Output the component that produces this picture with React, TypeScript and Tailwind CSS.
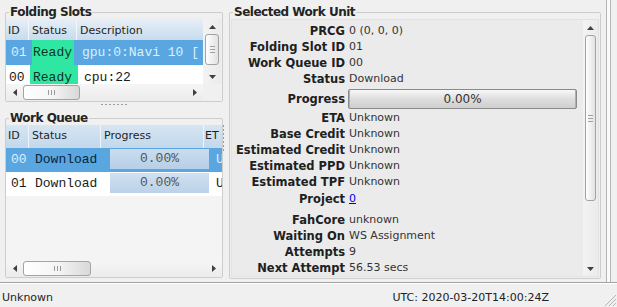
import type { ReactNode } from 'react'

const ui = "font-['DejaVu_Sans',sans-serif]"
const mono = "font-['Liberation_Mono','Courier_New',monospace]"

type Dir = 'up' | 'down' | 'left' | 'right'

function Arrow({ dir }: { dir: Dir }) {
  const vertical = dir === 'up' || dir === 'down'
  const w = vertical ? 7 : 4
  const h = vertical ? 4 : 7
  const points = {
    up: '0,4 7,4 3.5,0',
    down: '0,0 7,0 3.5,4',
    left: '4,0 4,7 0,3.5',
    right: '0,0 0,7 4,3.5',
  }[dir]
  return (
    <svg width={w} height={h} viewBox={`0 0 ${w} ${h}`}>
      <polygon points={points} fill="#404040" />
    </svg>
  )
}

function HScroll({ thumb }: { thumb: string }) {
  return (
    <div className="flex h-[17px] bg-gradient-to-b from-[#f6f6f6] to-[#ececec]">
      <div className="flex w-[17px] items-center justify-center">
        <Arrow dir="left" />
      </div>
      <div className="flex-1 py-[1px]">
        <div
          className={`flex h-full items-center justify-center gap-[2px] rounded-[3px] border border-[#a3a3a3] bg-gradient-to-r from-white via-[#f5f5f5] to-[#d9d9d9] ${thumb}`}
        >
          <span className="h-[5px] w-[1px] bg-[#9a9a9a]" />
          <span className="h-[5px] w-[1px] bg-[#9a9a9a]" />
          <span className="h-[5px] w-[1px] bg-[#9a9a9a]" />
        </div>
      </div>
      <div className="flex w-[17px] items-center justify-center">
        <Arrow dir="right" />
      </div>
    </div>
  )
}

function VScroll({ thumb, width }: { thumb: string; width: string }) {
  return (
    <div className={`flex ${width} flex-col items-center bg-gradient-to-r from-[#f3f3f3] to-[#ebebeb]`}>
      <div className="flex h-[15px] shrink-0 items-center">
        <Arrow dir="up" />
      </div>
      <div className="w-full px-[2px]">
        <div
          className={`flex flex-col items-center justify-center gap-[2px] rounded-[3px] border border-[#a3a3a3] bg-gradient-to-r from-white to-[#e2e2e2] ${thumb}`}
        >
          <span className="h-[1px] w-[5px] bg-[#a0a0a0]" />
          <span className="h-[1px] w-[5px] bg-[#a0a0a0]" />
          <span className="h-[1px] w-[5px] bg-[#a0a0a0]" />
        </div>
      </div>
      <div className="flex-1" />
      <div className="flex h-[15px] shrink-0 items-center">
        <Arrow dir="down" />
      </div>
    </div>
  )
}

function Dots({ vertical }: { vertical?: boolean }) {
  return (
    <div className={`flex ${vertical ? 'flex-col' : ''} gap-[2px]`}>
      {[0, 1, 2, 3, 4, 5, 6].map((i) => (
        <span key={i} className={`${vertical ? 'h-[2px] w-[1px]' : 'h-[1px] w-[2px]'} bg-[#9c9c9c]`} />
      ))}
    </div>
  )
}

// Qt-style group box: title sits over the top border
function GroupBox({ title, className, children }: { title: string; className: string; children: ReactNode }) {
  return (
    <div className={`relative flex shrink-0 flex-col rounded-[2px] border border-[#cdcdcd] pt-[6px] ${className}`}>
      <div className="absolute -top-[8px] left-[3px] bg-[#f0f0f0] px-[1px] text-[12px] leading-[14px] font-bold tracking-[-0.5px] text-[#242424]">
        {title}
      </div>
      {children}
    </div>
  )
}

function Field({ label, children, h = 'h-[16px]', top }: { label: string; children: ReactNode; h?: string; top?: boolean }) {
  return (
    <div className={`flex ${h} ${top ? 'items-start pt-[1px]' : 'items-center'}`}>
      <div className="w-[113px] text-right text-[11.5px] leading-[16px] font-bold text-[#202020]">{label}</div>
      <div className="ml-[4px] flex-1 leading-[16px] text-[#333]">{children}</div>
    </div>
  )
}

const selText = 'text-[#dcefff]'

export default function App() {
  return (
    <div className={`${ui} flex h-[307px] w-[617px] flex-col overflow-hidden bg-[#f0f0f0] text-[11px] text-[#1b1b1b]`}>
      <div className="flex h-[282px] shrink-0">
        {/* left column */}
        <div className="flex w-[223px] flex-col pt-[12px] pl-[5px]">
          <GroupBox title="Folding Slots" className="h-[90px]">
            <div className="flex h-[65px]">
              <div className="w-[197px] overflow-hidden bg-white">
                <div className="flex h-[21px] bg-gradient-to-b from-[#e6eff7] to-[#c8dbed] leading-[16px] text-[#1f1f1f]">
                  <div className="w-[23px] border-r border-[#f3f7fb] pt-[4px] pl-[2px]">ID</div>
                  <div className="w-[48px] border-r border-[#f3f7fb] pt-[4px] pl-[3px]">Status</div>
                  <div className="flex-1 pt-[4px] pl-[3px]">Description</div>
                </div>
                <div className={`${mono} flex h-[25px] items-center bg-[#59a6e1] text-[13px] whitespace-nowrap`}>
                  <div className={`w-[26px] pl-[5px] ${selText}`}>01</div>
                  <div className="flex h-full w-[42px] items-center bg-[#2fe6a3] pl-[1px] text-[#0a3524]">Ready</div>
                  <div className={`min-w-0 flex-1 overflow-hidden pl-[8px] ${selText}`}>gpu:0:Navi 10 [</div>
                </div>
                <div className={`${mono} flex h-[25px] items-center text-[13px] whitespace-nowrap text-[#1b1b1b]`}>
                  <div className="w-[24px] pl-[3px]">00</div>
                  <div className="flex h-full w-[48px] items-center bg-[#2fe6a3] pl-[3px] text-[#0a3524]">Ready</div>
                  <div className="pl-[6px]">cpu:22</div>
                </div>
              </div>
              <VScroll width="w-[18px]" thumb="h-[31px]" />
            </div>
            <div className="flex">
              <div className="w-[197px]">
                <HScroll thumb="w-[57px]" />
              </div>
              <div className="flex-1 bg-[#f0f0f0]" />
            </div>
          </GroupBox>

          <div className="flex h-[16px] shrink-0 justify-center pt-[2px]">
            <Dots />
          </div>

          <GroupBox title="Work Queue" className="h-[160px]">
            <div className="flex flex-1 flex-col overflow-hidden bg-[#f4f4f4]">
              <div className="flex h-[23px] shrink-0 bg-gradient-to-b from-[#d6e5f2] to-[#c3d8ec] leading-[16px] whitespace-nowrap text-[#1f1f1f]">
                <div className="w-[23px] shrink-0 border-r border-[#eef4fa] pt-[3px] pl-[2px]">ID</div>
                <div className="w-[72px] shrink-0 border-r border-[#eef4fa] pt-[3px] pl-[3px]">Status</div>
                <div className="w-[103px] shrink-0 border-r border-[#eef4fa] pt-[3px] pl-[3px]">Progress</div>
                <div className="min-w-0 flex-1 overflow-hidden pt-[3px] pl-[1px]">ET</div>
              </div>
              <div className={`${mono} flex h-[24px] shrink-0 bg-[#59a6e1] text-[13px] whitespace-nowrap`}>
                <div className={`flex w-[29px] shrink-0 items-center pl-[5px] ${selText}`}>00</div>
                <div className="flex w-[69px] shrink-0 items-center text-[#0d2438]">Download</div>
                <div className="mt-[1px] ml-[6px] flex h-[20px] w-[99px] shrink-0 items-center justify-center bg-gradient-to-b from-[#c9ddef] to-[#b7cfe7] text-[#555]">
                  0.00%
                </div>
                <div className={`flex min-w-0 flex-1 items-center overflow-hidden pl-[7px] ${selText}`}>Unknown</div>
              </div>
              <div className={`${mono} flex h-[24px] shrink-0 bg-white text-[13px] whitespace-nowrap text-[#1b1b1b]`}>
                <div className="flex w-[29px] shrink-0 items-center pl-[5px]">01</div>
                <div className="flex w-[69px] shrink-0 items-center">Download</div>
                <div className="mt-[1px] ml-[6px] flex h-[20px] w-[99px] shrink-0 items-center justify-center bg-gradient-to-b from-[#cfe0f0] to-[#bcd2e8] text-[#555]">
                  0.00%
                </div>
                <div className="flex min-w-0 flex-1 items-center overflow-hidden pl-[7px]">Unknown</div>
              </div>
              <div className="flex-1" />
              <HScroll thumb="w-[68px]" />
            </div>
          </GroupBox>
        </div>

        {/* splitter */}
        <div className="flex w-[6px] flex-col justify-center pb-[6px]">
          <Dots vertical />
        </div>

        {/* right column */}
        <div className="pt-[12px]">
          <GroupBox title="Selected Work Unit" className="h-[267px] w-[372px]">
            <div className="mx-[1px] mb-[1px] flex flex-1 border border-[#e2e2e2] bg-[#ebebeb]">
              <div className="flex-1 pt-[3px] whitespace-nowrap">
                <Field label="PRCG">0 (0, 0, 0)</Field>
                <Field label="Folding Slot ID">01</Field>
                <Field label="Work Queue ID">00</Field>
                <Field label="Status">Download</Field>
                <Field label="Progress" h="h-[23px]">
                  <div className="-ml-[1px] flex h-[20px] w-[229px] items-center justify-center rounded-[2px] border border-[#8a8a8a] bg-gradient-to-b from-[#f8f8f8] via-[#dedede] to-[#cfcfcf] text-[12px] text-[#333] shadow-[inset_1px_0_0_#b0b0b0,inset_-1px_0_0_#b0b0b0]">
                    0.00%
                  </div>
                </Field>
                <Field label="ETA">Unknown</Field>
                <Field label="Base Credit">Unknown</Field>
                <Field label="Estimated Credit">Unknown</Field>
                <Field label="Estimated PPD">Unknown</Field>
                <Field label="Estimated TPF">Unknown</Field>
                <Field label="Project" h="h-[22px]" top>
                  <span className="text-[#0000ee] underline">0</span>
                </Field>
                <Field label="FahCore">unknown</Field>
                <Field label="Waiting On">WS Assignment</Field>
                <Field label="Attempts">9</Field>
                <Field label="Next Attempt">56.53 secs</Field>
              </div>
              <VScroll width="w-[15px]" thumb="h-[166px]" />
            </div>
          </GroupBox>
        </div>

        {/* window frame */}
        <div className="flex w-[16px]">
          <div className="ml-[5px] w-[5px] border-x border-[#b4b4b4] bg-[#fbfbfb]" />
        </div>
      </div>

      {/* status bar */}
      <div className="flex flex-1 border-t border-[#a3a3a3] shadow-[inset_0_1px_0_#ffffff]">
        <div className="flex flex-1 items-start border-b-[3px] border-[#d9d9d9] pt-[7px] leading-[16px] text-[#222]">
          <div className="pl-[2px]">Unknown</div>
          <div className="flex-1" />
          <div>UTC: 2020-03-20T14:00:24Z</div>
          <div className="w-[54px]" />
          <svg className="mt-[3px]" width="14" height="14" viewBox="0 0 14 14">
            <path d="M13 2 L2 13 M13 6 L6 13 M13 10 L10 13" stroke="#b5b5b5" strokeWidth="1" />
          </svg>
        </div>
      </div>
    </div>
  )
}
